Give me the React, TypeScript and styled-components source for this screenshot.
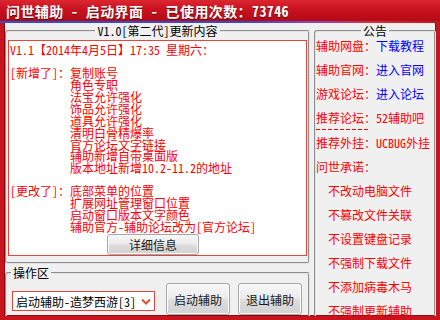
import styled, { createGlobalStyle } from 'styled-components';

const FONT = '"Noto Sans Mono CJK SC", "Noto Sans CJK SC", "DejaVu Sans Mono", monospace';

const GlobalStyle = createGlobalStyle`
  html, body {
    margin: 0;
    padding: 0;
    background: #ffffff;
  }
  body {
    font-family: ${FONT};
    font-size: 12px;
  }
`;

const Window = styled.div`
  width: 440px;
  height: 320px;
  display: flex;
  flex-direction: column;
  overflow: hidden;
`;

const TitleBar = styled.div`
  height: 21px;
  flex: none;
  display: flex;
  align-items: center;
  padding-left: 6px;
  background: linear-gradient(#dc2630 0%, #c91320 40%, #b40a16 100%);
  color: #ffffff;
  font-family: ${FONT};
  font-size: 14px;
  font-weight: bold;
  letter-spacing: 0.4px;
  white-space: pre;
  text-shadow: 0 1px 0 #6a0008;
`;

const AccentLine = styled.div`
  height: 2px;
  flex: none;
  background: linear-gradient(90deg, #2f4fd0 0%, #3a48c8 55%, #8a46b8 72%, #d0303a 85%, #c01622 100%);
`;

const Frame = styled.div`
  flex: 1;
  display: flex;
  background: #f0f0f0;
  border-left: 4px solid #c8141e;
  border-right: 4px solid #c8141e;
  border-bottom: 4px solid #c8141e;
  box-shadow: inset 1px 0 0 #8a0a12, inset -1px 0 0 #8a0a12, inset 0 -1px 0 #8a0a12;
  padding: 2px 0 0 1px;
  min-height: 0;
`;

const LeftColumn = styled.div`
  width: 305px;
  display: flex;
  flex-direction: column;
  gap: 3px;
`;

const Group = styled.fieldset<{ $height?: number; $open?: boolean }>`
  margin: 0;
  padding: 0;
  min-width: 0;
  box-sizing: border-box;
  ${(p) => (p.$height ? `height: ${p.$height}px;` : 'flex: 1;')}
  border: 2px groove #e2e2e2;
  border-radius: 3px;
  ${(p) => (p.$open ? 'border-bottom: none; border-radius: 3px 3px 0 0;' : '')}
  display: flex;
  flex-direction: column;
`;

const Legend = styled.legend<{ $center?: boolean }>`
  font-family: ${FONT};
  font-size: 12px;
  line-height: 12px;
  color: #000000;
  padding: 0 2px;
  margin: ${(p) => (p.$center ? '0 auto' : '0 0 0 4px')};
`;

const NotesBox = styled.div`
  margin: 3px 1px 0 1px;
  height: 216px;
  box-sizing: border-box;
  background: #ffffff;
  border: 1px solid #e2463c;
  padding: 3px 0 0 1px;
  overflow: hidden;
  display: flex;
  flex-direction: column;
`;

const Line = styled.div<{ $indent?: boolean }>`
  height: 11.9px;
  line-height: 11.9px;
  font-size: 12px;
  color: #ff0000;
  white-space: pre;
  padding-left: ${(p) => (p.$indent ? 60 : 0)}px;
`;

const Button = styled.button<{ $w: number; $h: number }>`
  width: ${(p) => p.$w}px;
  height: ${(p) => p.$h}px;
  flex: none;
  padding: 0;
  font-family: ${FONT};
  font-size: 12px;
  color: #1a1a1a;
  border: 1px solid #a6a6a6;
  border-radius: 3px;
  background: linear-gradient(#f7f7f7 0%, #ececec 45%, #dcdcdc 55%, #d2d2d2 100%);
  box-shadow: inset 0 0 0 1px #fbfbfb;
`;

const DetailButton = styled(Button)`
  margin: 1px 0 0 97px;
`;

const ActionRow = styled.div`
  display: flex;
  align-items: center;
  padding: 4px 0 0 5px;
`;

const Select = styled.div`
  width: 143px;
  height: 20px;
  box-sizing: border-box;
  margin: 4px 11px 0 0;
  background: #ffffff;
  border: 1px solid #e2463c;
  display: flex;
  align-items: center;
  justify-content: space-between;
  padding: 0 3px 0 3px;
  font-size: 12px;
  color: #000000;
  white-space: pre;
`;

const ButtonGap = styled.div`
  width: 8px;
  flex: none;
`;

const NoticeGroup = styled(Group)`
  margin-left: 4px;
  width: 122px;
  flex: none;
`;

const NoticeList = styled.div`
  margin-top: -3px;
  display: flex;
  flex-direction: column;
`;

const NoticeRow = styled.div<{ $indent?: boolean }>`
  height: 24px;
  line-height: 24px;
  font-size: 12px;
  color: #ff0000;
  white-space: pre;
  padding-left: ${(p) => (p.$indent ? 12 : 0)}px;
`;

const DashRule = styled.div`
  width: 54px;
  height: 1px;
  margin: -1px 0 1px 0;
  background: repeating-linear-gradient(90deg, #ff0000 0 4px, transparent 4px 6px);
`;

const LinkText = styled.span`
  color: #0000ff;
`;

const notes: { text: string; indent?: boolean }[] = [
  { text: 'V1.1【2014年4月5日】17:35 星期六：' },
  { text: '' },
  { text: '[新增了]：复制账号' },
  { text: '角色专职', indent: true },
  { text: '法宝允许强化', indent: true },
  { text: '饰品允许强化', indent: true },
  { text: '道具允许强化', indent: true },
  { text: '清明白骨精爆率', indent: true },
  { text: '官方论坛文字链接', indent: true },
  { text: '辅助新增自带桌面版', indent: true },
  { text: '版本地址新增10.2-11.2的地址', indent: true },
  { text: '' },
  { text: '[更改了]：底部菜单的位置' },
  { text: '扩展网址管理窗口位置', indent: true },
  { text: '启动窗口版本文字颜色', indent: true },
  { text: '辅助官方-辅助论坛改为[官方论坛]', indent: true },
];

const promises = ['不改动电脑文件', '不篡改文件关联', '不设置键盘记录', '不强制下载文件', '不添加病毒木马', '不强制更新辅助'];

const Chevron = () => (
  <svg width="10" height="7" viewBox="0 0 10 7">
    <path d="M1 1.5 L5 5.5 L9 1.5" fill="none" stroke="#e0502e" strokeWidth="2" />
  </svg>
);

export default function App() {
  return (
    <Window>
      <GlobalStyle />
      <TitleBar>问世辅助 - 启动界面 - 已使用次数：73746</TitleBar>
      <AccentLine />
      <Frame>
        <LeftColumn>
          <Group $height={239}>
            <Legend $center>V1.0[第二代]更新内容</Legend>
            <NotesBox>
              {notes.map((n, i) => (
                <Line key={i} $indent={n.indent}>{n.text}</Line>
              ))}
              <DetailButton $w={92} $h={21}>详细信息</DetailButton>
            </NotesBox>
          </Group>
          <Group $open>
            <Legend>操作区</Legend>
            <ActionRow>
              <Select>
                <span>启动辅助-造梦西游[3]</span>
                <Chevron />
              </Select>
              <Button $w={64} $h={32}>启动辅助</Button>
              <ButtonGap />
              <Button $w={64} $h={32}>退出辅助</Button>
            </ActionRow>
          </Group>
        </LeftColumn>
        <NoticeGroup $open>
          <Legend $center>公告</Legend>
          <NoticeList>
            <NoticeRow>辅助网盘：<LinkText>下载教程</LinkText></NoticeRow>
            <NoticeRow>辅助官网：<LinkText>进入官网</LinkText></NoticeRow>
            <NoticeRow>游戏论坛：<LinkText>进入论坛</LinkText></NoticeRow>
            <NoticeRow>推荐论坛：52辅助吧</NoticeRow>
            <DashRule />
            <NoticeRow>推荐外挂：UCBUG外挂</NoticeRow>
            <NoticeRow>问世承诺：</NoticeRow>
            {promises.map((p) => (
              <NoticeRow key={p} $indent>{p}</NoticeRow>
            ))}
          </NoticeList>
        </NoticeGroup>
      </Frame>
    </Window>
  );
}
